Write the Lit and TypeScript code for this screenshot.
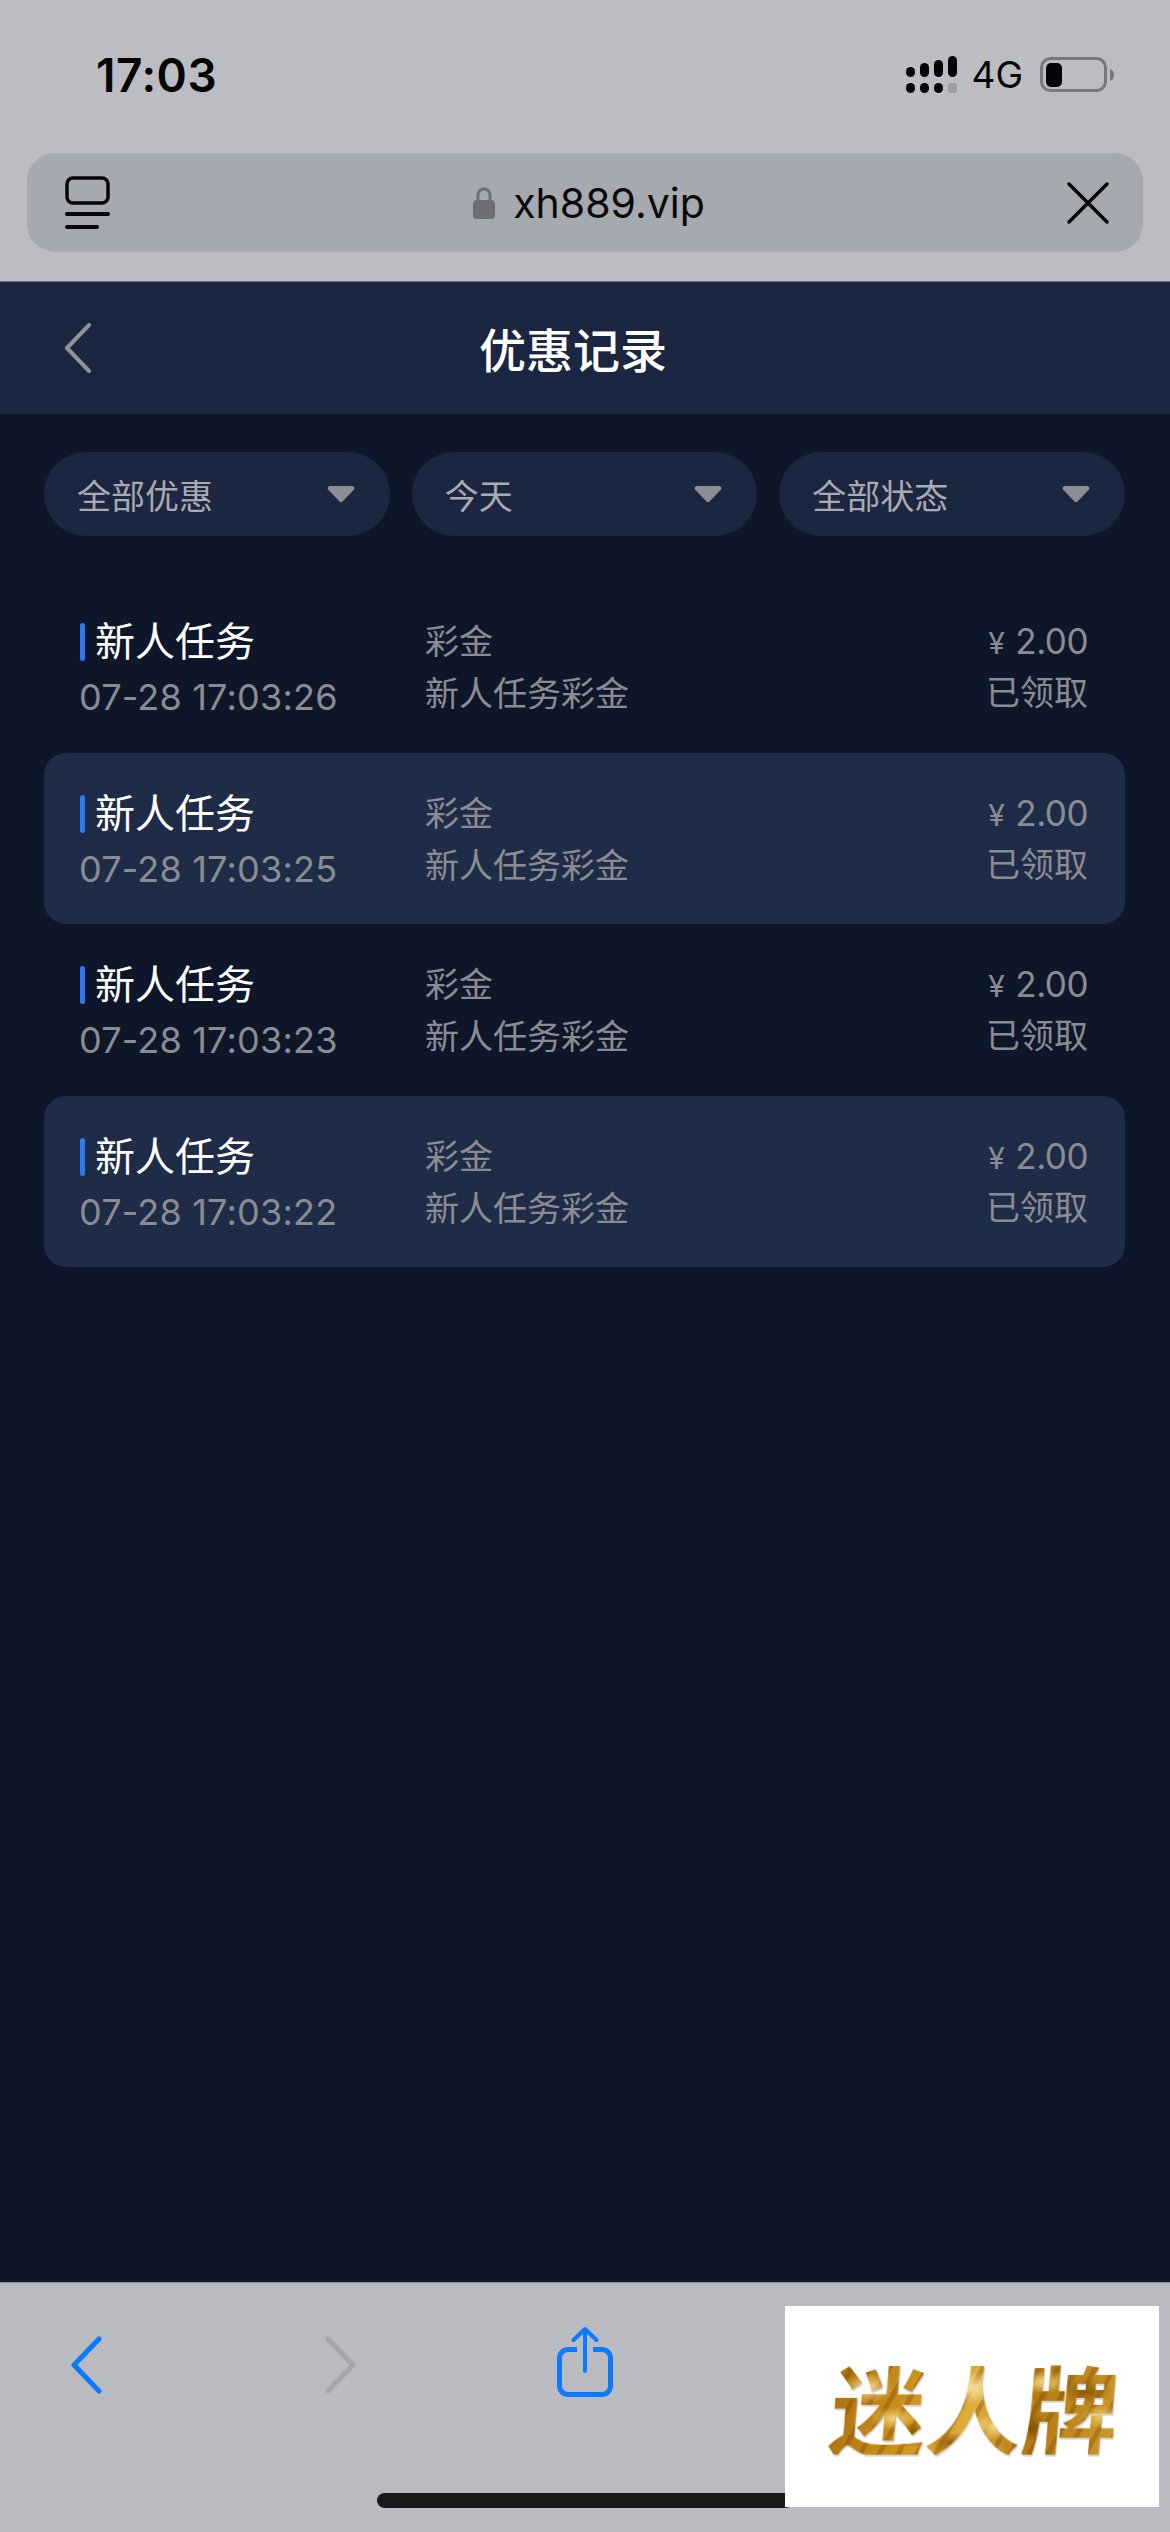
import { LitElement, html, css } from 'lit'
import { customElement } from 'lit/decorators.js'

const records = [
  { time: '07-28 17:03:26', alt: false },
  { time: '07-28 17:03:25', alt: true },
  { time: '07-28 17:03:23', alt: false },
  { time: '07-28 17:03:22', alt: true }
]

const filters = ['全部优惠', '今天', '全部状态']

@customElement('app-root')
export class AppRoot extends LitElement {
  static styles = css`
    :host {
      display: flex;
      flex-direction: column;
      position: relative;
      width: 1170px;
      height: 2532px;
      overflow: hidden;
      background: #0e172a;
      font-family: Inter, "Noto Sans CJK SC", sans-serif;
    }
    .chrome { background: #bbbdc2; height: 281px; box-sizing: border-box; padding: 0 27px; flex: none; }
    .status { height: 153px; display: flex; align-items: center; justify-content: space-between; padding: 0 28px 4px 69px; box-sizing: border-box; }
    .time { font-size: 46px; font-weight: 600; color: #050505; letter-spacing: 0.5px; }
    .status-right { display: flex; align-items: center; }
    .net { font-size: 37px; color: #050505; margin: 0 17px 0 13px; }
    .urlbar { height: 99px; border-radius: 28px; background: #a6a9b0; display: flex; align-items: center; justify-content: space-between; padding: 0 34px 0 38px; }
    .address { display: flex; align-items: center; gap: 18px; font-size: 41px; color: #0a0a0a; }
    .topbar { flex: none; height: 133px; background: #1b2640; border-top: 1px solid #6b7180; box-sizing: border-box; display: flex; align-items: center; justify-content: center; padding: 0 24px 2px 0; position: relative; }
    .topbar svg { position: absolute; left: 64px; top: 41px; }
    .title { font-size: 47px; font-weight: 500; color: #fff; }
    main { flex: 1; padding: 38px 45px 0 44px; }
    .filters { display: flex; gap: 22px; margin-bottom: 45px; }
    .filter { flex: 1; height: 84px; border-radius: 42px; background: #1b2640; display: flex; align-items: center; justify-content: space-between; padding: 0 35px 0 33px; color: #a9abb1; font-size: 34px; }
    .row { height: 171.5px; border-radius: 22px; display: flex; padding: 38px 37px 0 36px; box-sizing: border-box; color: #8b8c92; font-size: 34px; }
    .row.alt { background: #1f2c47; }
    .cell { display: flex; flex-direction: column; gap: 6px; }
    .first { width: 345px; }
    .middle { flex: 1; }
    .last { align-items: flex-end; }
    .line { height: 46px; line-height: 46px; white-space: nowrap; }
    .name { display: flex; align-items: center; color: #fff; font-size: 40px; gap: 10px; }
    .name::before { content: ""; width: 5px; height: 38px; border-radius: 2.5px; background: #2d79f3; }
    .date { font-size: 36px; letter-spacing: 0.2px; margin: 3px 0 0 -1px; }
    .amount { font-size: 35px; letter-spacing: -0.5px; margin-top: -1px; display: flex; align-items: baseline; gap: 11px; }
    .yen { font-size: 30px; }
    .toolbar { flex: none; height: 250px; background: #b9bbc0; border-top: 1px solid #8d9096; box-sizing: border-box; position: relative; }
    .toolbar svg { position: absolute; }
    .nav-back { left: 69px; top: 53px; }
    .nav-forward { left: 324px; top: 53px; }
    .nav-share { left: 555px; top: 42px; }
    .home { position: absolute; left: 377px; top: 2493px; width: 416px; height: 15px; border-radius: 8px; background: #1a1a1a; }
    .logo { position: absolute; left: 785px; top: 2306px; width: 374px; height: 201px; background: #fff; display: flex; align-items: center; justify-content: center; padding-left: 6px; box-sizing: border-box; }
    .logo span {
      font-family: "Noto Sans CJK SC", sans-serif;
      font-weight: 700;
      font-size: 96px;
      line-height: 1;
      transform: skewX(-5deg);
      color: transparent;
      filter: drop-shadow(1px 2px 0 rgba(130, 110, 80, 0.3));
      background:
        radial-gradient(ellipse 9% 16% at 12% 30%, #f6dc92 0, transparent 100%),
        radial-gradient(ellipse 8% 12% at 22% 62%, #f4d27a 0, transparent 100%),
        radial-gradient(ellipse 7% 14% at 30% 78%, #8a5606 0, transparent 100%),
        radial-gradient(ellipse 10% 18% at 48% 30%, #f8e2a0 0, transparent 100%),
        radial-gradient(ellipse 9% 14% at 58% 70%, #f6d98a 0, transparent 100%),
        radial-gradient(ellipse 7% 12% at 43% 88%, #8f5a06 0, transparent 100%),
        radial-gradient(ellipse 8% 12% at 73% 24%, #f5d782 0, transparent 100%),
        radial-gradient(ellipse 7% 14% at 70% 72%, #7f4e05 0, transparent 100%),
        radial-gradient(ellipse 9% 14% at 88% 34%, #8f5c08 0, transparent 100%),
        radial-gradient(ellipse 7% 12% at 94% 60%, #efc765 0, transparent 100%),
        repeating-linear-gradient(115deg, rgba(120, 72, 4, 0.35) 0 5px, transparent 5px 17px),
        linear-gradient(100deg, #a96e0c, #cf9520 30%, #dfae3c 50%, #b47a12 70%, #cf9a2c);
      -webkit-background-clip: text;
      background-clip: text;
    }
  `

  private renderStatusIcons () {
    return html`
      <svg width="52" height="38" viewBox="0 0 52 38">
        <rect x="0" y="11" width="9" height="10" rx="4.5" fill="#050505"/>
        <rect x="14" y="7" width="9" height="14" rx="4.5" fill="#050505"/>
        <rect x="28" y="4" width="9" height="17" rx="4.5" fill="#050505"/>
        <rect x="42" y="0" width="9" height="21" rx="4.5" fill="#050505"/>
        <rect x="0" y="27" width="9" height="10" rx="4.5" fill="#050505"/>
        <rect x="14" y="27" width="9" height="10" rx="4.5" fill="#050505"/>
        <rect x="28" y="27" width="9" height="10" rx="4.5" fill="#050505"/>
        <rect x="42" y="27" width="9" height="10" rx="3" fill="#9c9ea3"/>
      </svg>
    `
  }

  private renderBattery () {
    return html`
      <svg width="75" height="36" viewBox="0 0 75 36">
        <rect x="1.5" y="1.5" width="64" height="32" rx="9" fill="none" stroke="#77797d" stroke-width="3"/>
        <rect x="6" y="6" width="16" height="24" rx="5" fill="#050505"/>
        <path d="M70 12c3 1 4 3 4 6s-1 5-4 6z" fill="#77797d"/>
      </svg>
    `
  }

  private renderRow (r: { time: string, alt: boolean }) {
    return html`
      <div class="row ${r.alt ? 'alt' : ''}">
        <div class="cell first">
          <div class="line name">新人任务</div>
          <div class="line date">${r.time}</div>
        </div>
        <div class="cell middle">
          <div class="line">彩金</div>
          <div class="line">新人任务彩金</div>
        </div>
        <div class="cell last">
          <div class="line amount"><span class="yen">¥</span><span>2.00</span></div>
          <div class="line">已领取</div>
        </div>
      </div>
    `
  }

  render () {
    return html`
      <div class="chrome">
        <div class="status">
          <span class="time">17:03</span>
          <div class="status-right">
            ${this.renderStatusIcons()}
            <span class="net">4G</span>
            ${this.renderBattery()}
          </div>
        </div>
        <div class="urlbar">
          <svg width="46" height="54" viewBox="0 0 46 54">
            <rect x="2" y="2" width="41" height="25" rx="6" fill="none" stroke="#050505" stroke-width="3.500"/>
            <path d="M2 38h41" stroke="#050505" stroke-width="4" stroke-linecap="round"/>
            <path d="M2 51h30" stroke="#050505" stroke-width="4" stroke-linecap="round"/>
          </svg>
          <div class="address">
            <svg width="22" height="32" viewBox="0 0 22 32">
              <path d="M5 14V8a6 6 0 0 1 12 0v6" fill="none" stroke="#6d6f75" stroke-width="3"/>
              <rect x="0" y="13" width="22" height="19" rx="3.5" fill="#6d6f75"/>
            </svg>
            <span>xh889.vip</span>
          </div>
          <svg width="42" height="42" viewBox="0 0 42 42">
            <path d="M2 2l38 38M40 2L2 40" stroke="#050505" stroke-width="3.5" stroke-linecap="round"/>
          </svg>
        </div>
      </div>

      <div class="topbar">
        <svg width="28" height="50" viewBox="0 0 28 50">
          <path d="M25 2L3 25l22 23" fill="none" stroke="#8f9198" stroke-width="4" stroke-linecap="round" stroke-linejoin="round"/>
        </svg>
        <span class="title">优惠记录</span>
      </div>

      <main>
        <div class="filters">
          ${filters.map((f) => html`
            <div class="filter">
              <span>${f}</span>
              <svg width="28" height="18" viewBox="0 0 28 18">
                <path d="M3 1h22c2 0 3 2 2 3.500L16 16c-1 1.500-3 1.500-4 0L1 4.500C0 3 1 1 3 1z" fill="#8d8e93"/>
              </svg>
            </div>
          `)}
        </div>
        ${records.map((r) => this.renderRow(r))}
      </main>

      <div class="toolbar">
        <svg class="nav-back" width="34" height="58" viewBox="0 0 34 58">
          <path d="M30 3L5 29l25 26" fill="none" stroke="#0a7aff" stroke-width="5" stroke-linecap="round" stroke-linejoin="round"/>
        </svg>
        <svg class="nav-forward" width="34" height="58" viewBox="0 0 34 58">
          <path d="M4 3l25 26L4 55" fill="none" stroke="#a4a6ab" stroke-width="5" stroke-linecap="round" stroke-linejoin="round"/>
        </svg>
        <svg class="nav-share" width="60" height="74" viewBox="0 0 60 74">
          <path d="M22 24.500H13a8.500 8.500 0 0 0-8.500 8.500v28a8.500 8.500 0 0 0 8.500 8.500h34a8.500 8.500 0 0 0 8.500-8.500V33a8.500 8.500 0 0 0-8.500-8.500h-9" fill="none" stroke="#0a7aff" stroke-width="5"/>
          <path d="M30 46V4M18.500 15L30 4l11.500 11" fill="none" stroke="#0a7aff" stroke-width="4" stroke-linecap="round" stroke-linejoin="round"/>
        </svg>
      </div>

      <div class="home"></div>
      <div class="logo"><span>迷人牌</span></div>
    `
  }
}
